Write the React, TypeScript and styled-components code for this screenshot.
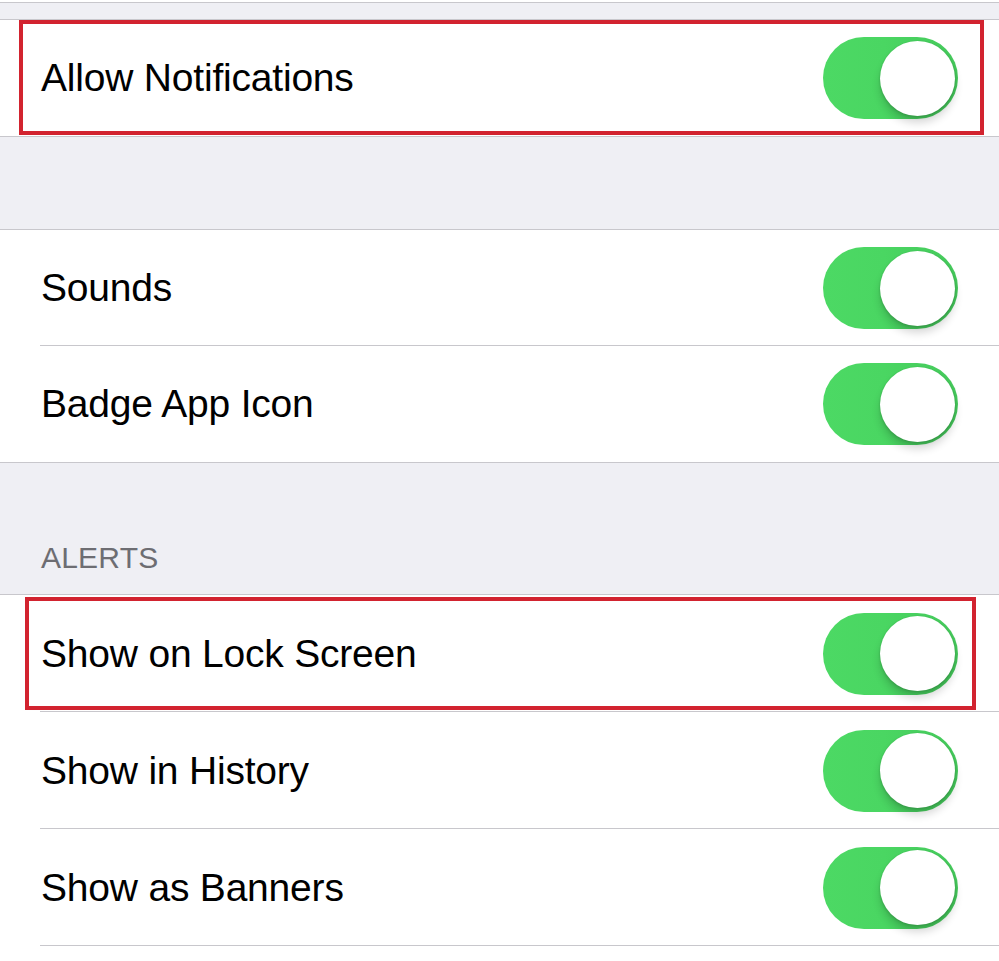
import React from 'react';
import styled, { createGlobalStyle } from 'styled-components';

const GlobalStyle = createGlobalStyle`
  html, body {
    margin: 0;
    padding: 0;
    background: #efeff4;
  }
  body {
    font-family: "Liberation Sans", Arial, sans-serif;
    -webkit-font-smoothing: antialiased;
  }
`;

const Page = styled.div`
  width: 999px;
  min-height: 961px;
  background: #efeff4;
  overflow: hidden;
`;

const TopEdge = styled.div`
  height: 2px;
  background: #ffffff;
  border-bottom: 1px solid #c8c7cc;
`;

const Spacer = styled.div<{ $h: number }>`
  height: ${p => p.$h}px;
`;

const SectionHeader = styled.div`
  height: 131px;
  display: flex;
  align-items: flex-end;
  padding: 0 41px 19px;
  box-sizing: border-box;
  font-size: 30px;
  color: #6d6d72;
  letter-spacing: 0.2px;
`;

const Section = styled.div<{ $open?: boolean }>`
  background: #ffffff;
  border-top: 1px solid #c8c7cc;
  border-bottom: ${p => (p.$open ? 'none' : '1px solid #c8c7cc')};
  padding-bottom: ${p => (p.$open ? '20px' : '0')};
`;

const Row = styled.div<{ $sep?: boolean; $h: number }>`
  position: relative;
  height: ${p => p.$h}px;
  display: flex;
  align-items: center;
  justify-content: space-between;
  padding: 0 41px;
  box-sizing: border-box;

  &::after {
    content: '';
    display: ${p => (p.$sep ? 'block' : 'none')};
    position: absolute;
    left: 40px;
    right: 0;
    bottom: 0;
    height: 1px;
    background: #c8c7cc;
  }
`;

const Label = styled.span`
  font-size: 39px;
  color: #000000;
  letter-spacing: -0.2px;
`;

const Track = styled.div`
  width: 135px;
  height: 82px;
  border-radius: 41px;
  background: linear-gradient(90deg, #4cd964 0%, #4ad662 45%, #45c95b 100%);
  display: flex;
  align-items: center;
  justify-content: flex-end;
  padding: 0 3px;
  box-sizing: border-box;
  flex-shrink: 0;
`;

const Knob = styled.div`
  width: 75px;
  height: 75px;
  border-radius: 50%;
  background: #ffffff;
  box-shadow: 0 7px 9px rgba(0, 0, 0, 0.16), 0 2px 3px rgba(0, 0, 0, 0.1),
    0 0 0 1px rgba(0, 0, 0, 0.03);
`;

const Highlight = styled.div<{ $top: number; $left: number; $right: number; $bottom: number }>`
  position: absolute;
  top: ${p => p.$top}px;
  left: ${p => p.$left}px;
  right: ${p => p.$right}px;
  bottom: ${p => p.$bottom}px;
  border: 4px solid #d2232f;
  pointer-events: none;
`;

interface Mark {
  top: number;
  left: number;
  right: number;
  bottom: number;
}

function Toggle() {
  return (
    <Track>
      <Knob />
    </Track>
  );
}

function SwitchRow({
  label,
  sep,
  mark,
  height = 116,
}: {
  label: string;
  sep?: boolean;
  mark?: Mark;
  height?: number;
}) {
  return (
    <Row $sep={sep} $h={height}>
      <Label>{label}</Label>
      <Toggle />
      {mark && (
        <Highlight $top={mark.top} $left={mark.left} $right={mark.right} $bottom={mark.bottom} />
      )}
    </Row>
  );
}

export default function App() {
  return (
    <>
      <GlobalStyle />
      <Page>
        <TopEdge />
        <Spacer $h={16} />
        <Section>
          <SwitchRow label="Allow Notifications" mark={{ top: 0, left: 19, right: 15, bottom: 1 }} />
        </Section>
        <Spacer $h={92} />
        <Section>
          <SwitchRow label="Sounds" sep />
          <SwitchRow label="Badge App Icon" />
        </Section>
        <SectionHeader>ALERTS</SectionHeader>
        <Section $open>
          <SwitchRow
            label="Show on Lock Screen"
            sep
            height={117}
            mark={{ top: 2, left: 25, right: 23, bottom: 2 }}
          />
          <SwitchRow label="Show in History" sep height={117} />
          <SwitchRow label="Show as Banners" sep height={117} />
        </Section>
      </Page>
    </>
  );
}
